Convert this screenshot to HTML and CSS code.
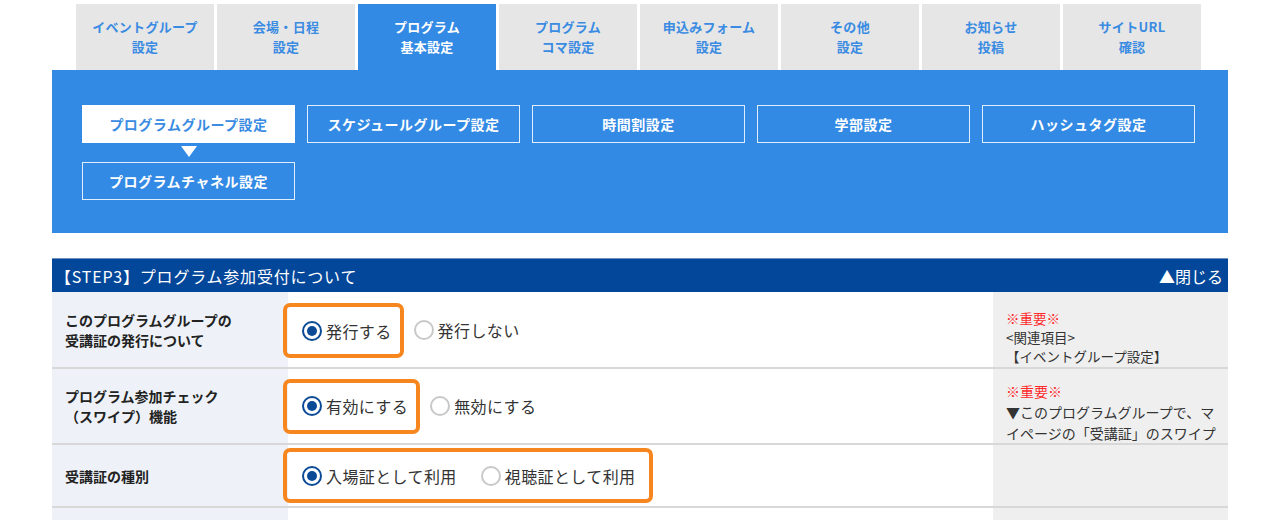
FILE: index.html
```html
<!DOCTYPE html>
<html lang="ja">
<head>
  <meta charset="UTF-8">
  <meta name="viewport" content="width=device-width, initial-scale=1.0">
  <title>プログラム基本設定</title>
  <link rel="stylesheet" href="styles.css">
</head>
<body>

  <div class="page">
    <ul class="tabs">
      <li class="tab">イベントグループ<br>設定</li>
      <li class="tab">会場・日程<br>設定</li>
      <li class="tab active">プログラム<br>基本設定</li>
      <li class="tab">プログラム<br>コマ設定</li>
      <li class="tab">申込みフォーム<br>設定</li>
      <li class="tab">その他<br>設定</li>
      <li class="tab">お知らせ<br>投稿</li>
      <li class="tab">サイトURL<br>確認</li>
    </ul>

    <div class="sub-panel">
      <div class="sub-grid">
        <a class="sub-btn current">プログラムグループ設定</a>
        <a class="sub-btn">スケジュールグループ設定</a>
        <a class="sub-btn">時間割設定</a>
        <a class="sub-btn">学部設定</a>
        <a class="sub-btn">ハッシュタグ設定</a>
        <a class="sub-btn">プログラムチャネル設定</a>
      </div>
    </div>

    <div class="section">
      <div class="section-head">
        <span>【STEP3】プログラム参加受付について</span>
        <span class="close">▲閉じる</span>
      </div>

      <div class="row row1">
        <div class="cell-label">このプログラムグループの<br>受講証の発行について</div>
        <div class="cell-field">
          <div class="mark">
            <label class="opt"><span class="radio on"></span>発行する</label>
          </div>
          <label class="opt"><span class="radio"></span>発行しない</label>
        </div>
        <div class="cell-note">
          <span class="important">※重要※</span><br>
          &lt;関連項目&gt;<br>
          【イベントグループ設定】
        </div>
      </div>

      <div class="row row2">
        <div class="cell-label">プログラム参加チェック<br>（スワイプ）機能</div>
        <div class="cell-field">
          <div class="mark">
            <label class="opt"><span class="radio on"></span>有効にする</label>
          </div>
          <label class="opt"><span class="radio"></span>無効にする</label>
        </div>
        <div class="cell-note">
          <span class="important">※重要※</span><br>
          ▼このプログラムグループで、マ<br>イページの「受講証」のスワイプ
        </div>
      </div>

      <div class="row row3">
        <div class="cell-label">受講証の種別</div>
        <div class="cell-field">
          <div class="mark wide">
            <label class="opt"><span class="radio on"></span>入場証として利用</label>
            <label class="opt"><span class="radio"></span>視聴証として利用</label>
          </div>
        </div>
        <div class="cell-note"></div>
      </div>

      <div class="row row4">
        <div class="cell-label"></div>
        <div class="cell-field"></div>
        <div class="cell-note"></div>
      </div>
    </div>
  </div>

</body>
</html>
```

FILE: styles.css
```css
  body {
    margin: 0;
    font-family: "Noto Sans CJK JP", "Noto Sans", sans-serif;
    background-color: #ffffff;
    color: #222222;
  }
  .page {
    width: 1176px;
    margin-left: 52px;
  }

  /* onglets du haut */
  .tabs {
    list-style: none;
    margin: 0;
    padding: 4px 27px 0 24px;
    display: flex;
    gap: 3px;
  }
  .tab {
    flex: 1;
    height: 66px;
    background-color: #e6e6e6;
    color: #3a8be2;
    font-size: 13px;
    font-weight: bold;
    line-height: 20px;
    letter-spacing: 0.3px;
    display: flex;
    align-items: center;
    justify-content: center;
    text-align: center;
  }
  .tab.active {
    background-color: #338ae4;
    color: #ffffff;
  }

  /* panneau bleu */
  .sub-panel {
    background-color: #338ae4;
    padding: 35px 30px 33px 30px;
  }
  .sub-grid {
    display: grid;
    grid-template-columns: repeat(5, 213px);
    column-gap: 12px;
    row-gap: 19px;
  }
  .sub-btn {
    position: relative;
    height: 38px;
    box-sizing: border-box;
    border: 1px solid rgba(255, 255, 255, 0.85);
    color: #ffffff;
    font-size: 14px;
    font-weight: bold;
    letter-spacing: 0.5px;
    display: flex;
    align-items: center;
    justify-content: center;
  }
  .sub-btn.current {
    background-color: #ffffff;
    color: #3a8be2;
  }
  .sub-btn.current::after {
    content: "";
    position: absolute;
    left: 50%;
    top: 40px;
    margin-left: -8px;
    border-left: 8px solid transparent;
    border-right: 8px solid transparent;
    border-top: 11px solid #ffffff;
  }

  /* section STEP3 */
  .section {
    margin-top: 25px;
  }
  .section-head {
    height: 34px;
    box-sizing: border-box;
    background-color: #03479a;
    border-top: 1px solid #6f8fc0;
    color: #ffffff;
    font-size: 16px;
    letter-spacing: 0.8px;
    padding: 0 5px 0 3px;
    display: flex;
    align-items: center;
    justify-content: space-between;
  }
  .close {
    letter-spacing: 0;
  }
  .row {
    display: grid;
    grid-template-columns: 236px 705px 235px;
    border-bottom: 2px solid #d8d8d8;
  }
  .row1 { height: 75px; }
  .row2 { height: 74px; }
  .row3 { height: 61px; }
  .row4 { height: 20px; border-bottom: none; }

  .cell-label {
    background-color: #eef2f8;
    font-size: 14px;
    font-weight: bold;
    line-height: 20px;
    padding-left: 13px;
    display: flex;
    align-items: center;
  }
  .cell-field {
    display: flex;
    align-items: center;
    gap: 10px;
  }
  .cell-note {
    background-color: #efefef;
    font-size: 13.5px;
    line-height: 19px;
    color: #333333;
    padding: 17px 8px 0 13px;
    overflow: hidden;
  }
  .row2 .cell-note {
    padding-top: 12px;
    line-height: 21px;
    font-size: 14px;
  }
  .important {
    color: #ff2a2a;
  }

  /* cadre orange */
  .mark {
    margin-left: -5px;
    height: 55px;
    box-sizing: border-box;
    border: 4px solid #f7861f;
    border-radius: 7px;
    padding: 0 8px 0 15px;
    display: flex;
    align-items: center;
    gap: 24px;
  }
  .mark.wide {
    padding-right: 14px;
  }
  .row1 .mark { margin-top: 2px; }

  .opt {
    display: flex;
    align-items: center;
    gap: 4px;
    font-size: 16px;
    letter-spacing: 0.4px;
    color: #333333;
  }
  .radio {
    width: 20px;
    height: 20px;
    box-sizing: border-box;
    border: 2px solid #c8c8c8;
    border-radius: 50%;
    background-color: #ffffff;
    display: flex;
    align-items: center;
    justify-content: center;
  }
  .radio.on {
    border-color: #0b4a97;
  }
  .radio.on::after {
    content: "";
    width: 10px;
    height: 10px;
    border-radius: 50%;
    background-color: #0b4a97;
  }
```
